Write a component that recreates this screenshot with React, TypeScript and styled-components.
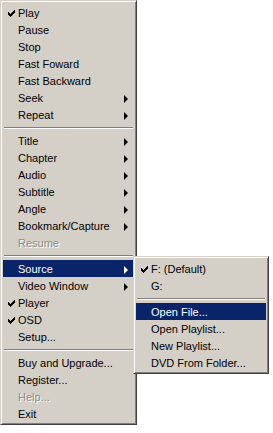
import styled, { createGlobalStyle } from 'styled-components';

const GlobalStyle = createGlobalStyle`
  html, body {
    margin: 0;
    padding: 0;
    background: #ffffff;
  }
  body {
    font-family: "Liberation Sans", Arial, sans-serif;
    font-size: 11px;
  }
`;

const Page = styled.div`
  position: relative;
  width: 273px;
  height: 433px;
`;

const Menu = styled.div<{ $width: number }>`
  box-sizing: border-box;
  width: ${(p) => p.$width}px;
  background: #d4d0c8;
  border: 1px solid;
  border-color: #d4d0c8 #404040 #404040 #d4d0c8;
  box-shadow: inset 1px 1px #ffffff, inset -1px -1px #808080;
  padding: 3px 2px 2px;
  display: flex;
  flex-direction: column;
`;

const SubMenu = styled(Menu)`
  position: absolute;
  left: 133px;
  top: 256px;
`;

const Item = styled.div<{ $active?: boolean; $disabled?: boolean }>`
  height: 17px;
  display: grid;
  grid-template-columns: 15px 1fr 10px;
  align-items: center;
  padding-right: 6px;
  color: ${(p) => (p.$disabled ? '#8a8a8a' : p.$active ? '#ffffff' : '#000000')};
  background: ${(p) => (p.$active ? '#0a246a' : 'transparent')};
  text-shadow: ${(p) => (p.$disabled ? '1px 1px 0 #ffffff' : 'none')};
  white-space: nowrap;
`;

const CheckCell = styled.span`
  display: flex;
  justify-content: center;
  align-items: center;
  padding-left: 2px;
  padding-top: 1px;
`;

const Label = styled.span`
  line-height: 17px;
  margin-top: 1px;
`;

const Arrow = styled.span<{ $active?: boolean }>`
  justify-self: end;
  width: 0;
  height: 0;
  margin-top: 1px;
  border-top: 4px solid transparent;
  border-bottom: 4px solid transparent;
  border-left: 4px solid ${(p) => (p.$active ? '#ffffff' : '#000000')};
`;

const Separator = styled.div`
  height: 9px;
  display: flex;
  flex-direction: column;
  justify-content: center;
  margin: 0 1px;

  &::before {
    content: '';
    height: 1px;
    background: #808080;
  }
  &::after {
    content: '';
    height: 1px;
    background: #ffffff;
  }
`;

function Check({ color }: { color: string }) {
  return (
    <svg width="7" height="7" viewBox="0 0 7 7">
      <path d="M0 2h1v1h1v1h1V3h1V2h1V1h1V0h1v3H6v1H5v1H4v1H3v1H2V6H1V5H0z" fill={color} />
    </svg>
  );
}

type Entry =
  | { sep: true }
  | { label: string; checked?: boolean; sub?: boolean; active?: boolean; disabled?: boolean };

const mainItems: Entry[] = [
  { label: 'Play', checked: true },
  { label: 'Pause' },
  { label: 'Stop' },
  { label: 'Fast Foward' },
  { label: 'Fast Backward' },
  { label: 'Seek', sub: true },
  { label: 'Repeat', sub: true },
  { sep: true },
  { label: 'Title', sub: true },
  { label: 'Chapter', sub: true },
  { label: 'Audio', sub: true },
  { label: 'Subtitle', sub: true },
  { label: 'Angle', sub: true },
  { label: 'Bookmark/Capture', sub: true },
  { label: 'Resume', disabled: true },
  { sep: true },
  { label: 'Source', sub: true, active: true },
  { label: 'Video Window', sub: true },
  { label: 'Player', checked: true },
  { label: 'OSD', checked: true },
  { label: 'Setup...' },
  { sep: true },
  { label: 'Buy and Upgrade...' },
  { label: 'Register...' },
  { label: 'Help...', disabled: true },
  { label: 'Exit' },
];

const sourceItems: Entry[] = [
  { label: 'F: (Default)', checked: true },
  { label: 'G:' },
  { sep: true },
  { label: 'Open File...', active: true },
  { label: 'Open Playlist...' },
  { label: 'New Playlist...' },
  { label: 'DVD From Folder...' },
];

function MenuItems({ items }: { items: Entry[] }) {
  return (
    <>
      {items.map((entry, i) =>
        'sep' in entry ? (
          <Separator key={i} />
        ) : (
          <Item key={i} $active={entry.active} $disabled={entry.disabled}>
            <CheckCell>{entry.checked && <Check color={entry.active ? '#fff' : '#000'} />}</CheckCell>
            <Label>{entry.label}</Label>
            {entry.sub ? <Arrow $active={entry.active} /> : <span />}
          </Item>
        ),
      )}
    </>
  );
}

export default function App() {
  return (
    <Page>
      <GlobalStyle />
      <Menu $width={137}>
        <MenuItems items={mainItems} />
      </Menu>
      <SubMenu $width={136}>
        <MenuItems items={sourceItems} />
      </SubMenu>
    </Page>
  );
}
